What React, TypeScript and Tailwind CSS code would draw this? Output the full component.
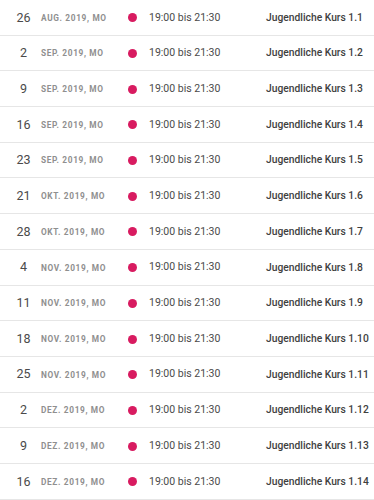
import type React from 'react';

interface Termin {
  day: string;
  month: string;
  title: string;
}

const termine: Termin[] = [
  { day: '26', month: 'Aug. 2019, Mo', title: 'Jugendliche Kurs 1.1' },
  { day: '2', month: 'Sep. 2019, Mo', title: 'Jugendliche Kurs 1.2' },
  { day: '9', month: 'Sep. 2019, Mo', title: 'Jugendliche Kurs 1.3' },
  { day: '16', month: 'Sep. 2019, Mo', title: 'Jugendliche Kurs 1.4' },
  { day: '23', month: 'Sep. 2019, Mo', title: 'Jugendliche Kurs 1.5' },
  { day: '21', month: 'Okt. 2019, Mo', title: 'Jugendliche Kurs 1.6' },
  { day: '28', month: 'Okt. 2019, Mo', title: 'Jugendliche Kurs 1.7' },
  { day: '4', month: 'Nov. 2019, Mo', title: 'Jugendliche Kurs 1.8' },
  { day: '11', month: 'Nov. 2019, Mo', title: 'Jugendliche Kurs 1.9' },
  { day: '18', month: 'Nov. 2019, Mo', title: 'Jugendliche Kurs 1.10' },
  { day: '25', month: 'Nov. 2019, Mo', title: 'Jugendliche Kurs 1.11' },
  { day: '2', month: 'Dez. 2019, Mo', title: 'Jugendliche Kurs 1.12' },
  { day: '9', month: 'Dez. 2019, Mo', title: 'Jugendliche Kurs 1.13' },
  { day: '16', month: 'Dez. 2019, Mo', title: 'Jugendliche Kurs 1.14' },
];

const App: React.FC = () => {
  return (
    <div className="w-[374px] bg-white font-['Roboto',sans-serif]">
      <ul>
        {termine.map((t, i) => (
          <li
            key={i}
            className="flex h-[35.7px] items-center border-b border-[#e6e6e6] pl-[10px] pt-px"
          >
            <span className="w-[27px] text-center text-[12.5px] leading-none text-[#4a4a4a]">
              {t.day}
            </span>
            <span className="ml-[4px] w-[87px] text-[8.3px] font-bold uppercase leading-none tracking-[0.65px] text-[#8f8f8f]">
              {t.month}
            </span>
            <span className="h-[9px] w-[9px] shrink-0 rounded-full bg-[#d81b60]" />
            <span className="ml-[12px] w-[117px] text-[10.5px] leading-none text-[#4a4a4a]">
              19:00 bis 21:30
            </span>
            <span className="text-[10.3px] font-medium leading-none text-[#3f3f3f]">
              {t.title}
            </span>
          </li>
        ))}
      </ul>
    </div>
  );
};

export default App;
